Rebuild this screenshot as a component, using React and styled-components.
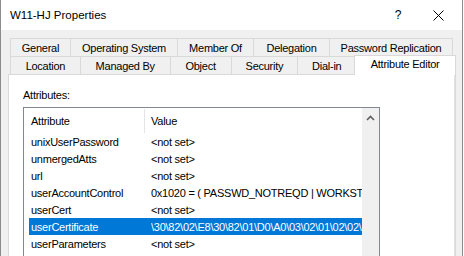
import React from 'react';
import styled, { createGlobalStyle } from 'styled-components';

const GlobalStyle = createGlobalStyle`
  html, body {
    margin: 0;
    padding: 0;
    background: #ffffff;
  }
  body {
    font-family: 'Liberation Sans', Arial, sans-serif;
    font-size: 11px;
    letter-spacing: -0.25px;
    color: #000;
  }
`;

const Window = styled.div`
  width: 463px;
  height: 256px;
  box-sizing: border-box;
  border-left: 1px solid #8c8c8c;
  border-right: 1px solid #8c8c8c;
  display: flex;
  flex-direction: column;
  overflow: hidden;
`;

const TitleBar = styled.div`
  height: 30px;
  flex-shrink: 0;
  background: #fff;
  display: flex;
  align-items: center;
  padding-left: 9px;
`;

const Title = styled.div`
  flex: 1;
  font-size: 11.5px;
  letter-spacing: 0;
  padding-bottom: 1px;
`;

const HelpButton = styled.div`
  width: 46px;
  text-align: center;
  font-size: 12px;
  letter-spacing: 0;
  margin-right: -6px;
`;

const CloseButton = styled.div`
  width: 46px;
  height: 30px;
  display: flex;
  align-items: center;
  justify-content: center;
  margin-right: 1px;
`;

const Client = styled.div`
  flex: 1;
  background: #f0f0f0;
  padding: 8px 6px 0 7px;
  display: flex;
  flex-direction: column;
  min-height: 0;
`;

const TabRow = styled.div`
  display: flex;
  align-items: flex-start;
  height: 18px;
  padding-left: 2px;
`;

const Tab = styled.div`
  width: ${({ w }) => w}px;
  height: 18px;
  box-sizing: border-box;
  border: 1px solid #d9d9d9;
  border-bottom: none;
  margin-left: -1px;
  &:first-child { margin-left: 0; }
  background: ${({ active }) => (active ? '#fff' : '#f0f0f0')};
  display: flex;
  align-items: center;
  justify-content: center;
  white-space: nowrap;
  ${({ active }) =>
    active &&
    `
    position: relative;
    z-index: 1;
    height: 20px;
    margin-top: -1px;
    margin-left: -2px;
    padding-bottom: 3px;
  `}
`;

const Panel = styled.div`
  flex: 1;
  background: #fff;
  border: 1px solid #d9d9d9;
  border-bottom: none;
  box-shadow: inset -1px 0 0 #e3e3e3;
  padding: 13px 0 0 14px;
  display: flex;
  flex-direction: column;
  min-height: 0;
`;

const Label = styled.div`
  line-height: 14px;
  margin-bottom: 5px;
`;

const ListBox = styled.div`
  width: 357px;
  flex: 1;
  box-sizing: border-box;
  border: 1px solid #828790;
  border-bottom: none;
  display: flex;
  min-height: 0;
`;

const ListBody = styled.div`
  flex: 1;
  overflow: hidden;
  display: flex;
  flex-direction: column;
`;

const Header = styled.div`
  height: 25px;
  flex-shrink: 0;
  display: flex;
  align-items: center;
`;

const HeaderCell = styled.div`
  width: ${({ w }) => (w ? `${w}px` : 'auto')};
  flex: ${({ w }) => (w ? 'none' : '1')};
  padding-left: ${({ pad }) => pad}px;
  box-sizing: border-box;
  height: 24px;
  display: flex;
  align-items: center;
  border-right: ${({ sep }) => (sep ? '1px solid #e5e5e5' : 'none')};
`;

const Row = styled.div`
  height: 17px;
  flex-shrink: 0;
  margin-left: 5px;
  display: flex;
  align-items: center;
  white-space: nowrap;
  overflow: hidden;
  background: ${({ selected }) => (selected ? '#0078d7' : 'transparent')};
  color: ${({ selected }) => (selected ? '#fff' : '#000')};
`;

const NameCell = styled.div`
  width: 122px;
  flex-shrink: 0;
  padding-left: 2px;
  box-sizing: border-box;
`;

const ValueCell = styled.div`
  flex: 1;
  overflow: hidden;
`;

const ScrollBar = styled.div`
  width: 17px;
  flex-shrink: 0;
  background: #f0f0f0;
  display: flex;
  justify-content: center;
  padding-top: 7px;
  box-sizing: border-box;
`;

const tabsTop = [
  { label: 'General', w: 61 },
  { label: 'Operating System', w: 108 },
  { label: 'Member Of', w: 77 },
  { label: 'Delegation', w: 77 },
  { label: 'Password Replication', w: 124 },
];

const tabsBottom = [
  { label: 'Location', w: 71 },
  { label: 'Managed By', w: 91 },
  { label: 'Object', w: 62 },
  { label: 'Security', w: 68 },
  { label: 'Dial-in', w: 59 },
  { label: 'Attribute Editor', w: 102, active: true },
];

const rows = [
  ['unixUserPassword', '<not set>'],
  ['unmergedAtts', '<not set>'],
  ['url', '<not set>'],
  ['userAccountControl', '0x1020 = ( PASSWD_NOTREQD | WORKSTATION_TRUST_ACCOUNT )'],
  ['userCert', '<not set>'],
  ['userCertificate', '\\30\\82\\02\\E8\\30\\82\\01\\D0\\A0\\03\\02\\01\\02\\02\\13\\55', true],
  ['userParameters', '<not set>'],
  ['userPassword', '<not set>'],
];

export default function App() {
  return (
    <>
      <GlobalStyle />
      <Window>
        <TitleBar>
          <Title>W11-HJ Properties</Title>
          <HelpButton>?</HelpButton>
          <CloseButton>
            <svg width="11" height="11" viewBox="0 0 11 11">
              <path d="M0.5 0.5 L10.5 10.5 M10.5 0.5 L0.5 10.5" stroke="#000" strokeWidth="1" fill="none" />
            </svg>
          </CloseButton>
        </TitleBar>
        <Client>
          <TabRow>
            {tabsTop.map((t) => (
              <Tab key={t.label} w={t.w}>{t.label}</Tab>
            ))}
          </TabRow>
          <TabRow>
            {tabsBottom.map((t) => (
              <Tab key={t.label} w={t.w} active={t.active}>{t.label}</Tab>
            ))}
          </TabRow>
          <Panel>
            <Label>Attributes:</Label>
            <ListBox>
              <ListBody>
                <Header>
                  <HeaderCell w={121} pad={7} sep>Attribute</HeaderCell>
                  <HeaderCell pad={6}>Value</HeaderCell>
                </Header>
                {rows.map(([name, value, sel]) => (
                  <Row key={name} selected={sel}>
                    <NameCell>{name}</NameCell>
                    <ValueCell>{value}</ValueCell>
                  </Row>
                ))}
              </ListBody>
              <ScrollBar>
                <svg width="9" height="6" viewBox="0 0 9 6">
                  <path d="M1 5 L4.5 1.5 L8 5" stroke="#606060" strokeWidth="1.6" fill="none" />
                </svg>
              </ScrollBar>
            </ListBox>
          </Panel>
        </Client>
      </Window>
    </>
  );
}
